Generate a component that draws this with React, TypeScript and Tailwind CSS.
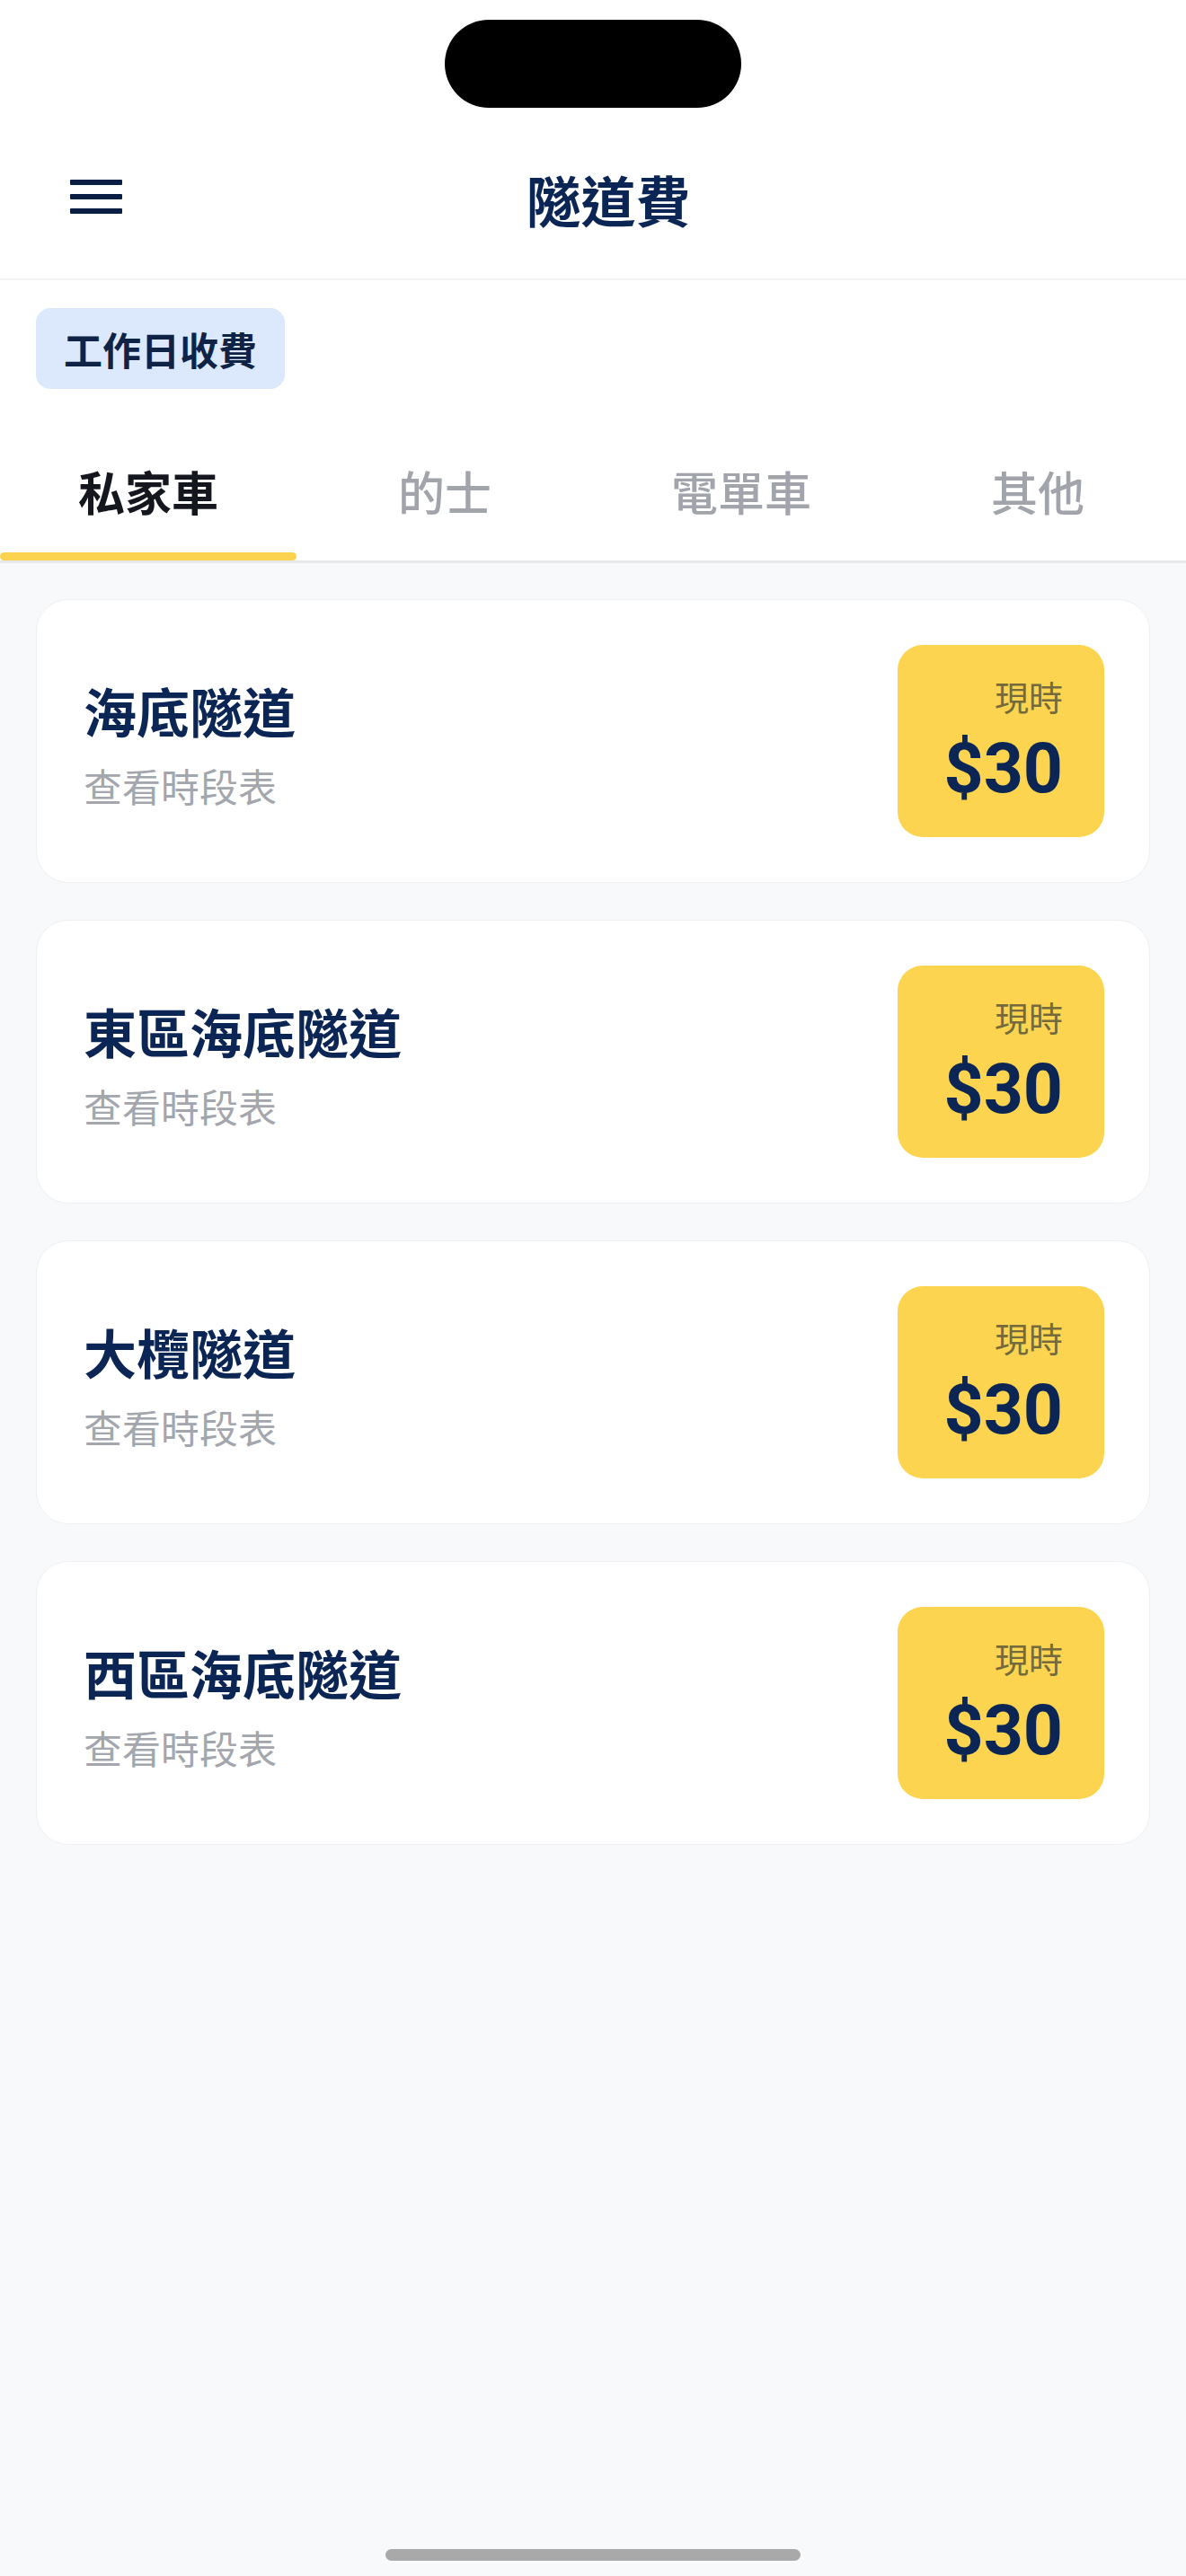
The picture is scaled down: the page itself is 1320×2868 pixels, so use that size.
import { useState } from 'react';

/**
 * Tunnel toll screen (隧道費).
 */

const TABS = ['私家車', '的士', '電單車', '其他'];

const TUNNELS = [
  { name: '海底隧道', price: 30 },
  { name: '東區海底隧道', price: 30 },
  { name: '大欖隧道', price: 30 },
  { name: '西區海底隧道', price: 30 },
];

function MenuIcon() {
  return (
    <svg width="58" height="38" viewBox="0 0 58 38" fill="#0b1f44">
      <rect x="0" y="0" width="58" height="6" rx="1" />
      <rect x="0" y="16" width="58" height="6" rx="1" />
      <rect x="0" y="32" width="58" height="6" rx="1" />
    </svg>
  );
}

function TunnelCard({ name, price }: { name: string; price: number }) {
  return (
    <div className="h-[316px] rounded-[36px] bg-white border border-[#eef0f3] flex items-center justify-between pl-[52px] pr-[50px]">
      <div className="flex flex-col pt-[6px]">
        <span className="text-[59px] leading-none font-bold text-[#0b2554]">{name}</span>
        <span className="mt-[33px] text-[43px] leading-none text-[#a3a6ad]">查看時段表</span>
      </div>
      <div className="w-[230px] h-[214px] rounded-[28px] bg-[#fcd44f] flex flex-col items-end justify-center pr-[46px]">
        <span className="text-[38px] leading-none text-[#746a3c]">現時</span>
        <span className="mt-[24px] text-[77px] leading-none font-bold text-[#0b2554] font-['Roboto',sans-serif]">
          ${price}
        </span>
      </div>
    </div>
  );
}

export default function App() {
  const [active, setActive] = useState(0);

  return (
    <div className="w-[1320px] h-[2868px] bg-[#f8f9fb] flex flex-col font-['Noto_Sans_CJK_TC','Noto_Sans',sans-serif]">
      {/* header */}
      <div className="bg-white border-b-2 border-[#f2f3f5]">
        <div className="h-[140px] pt-[22px] flex justify-center">
          <div className="w-[330px] h-[98px] rounded-full bg-black" />
        </div>
        <div className="h-[170px] relative flex items-center justify-center pl-[34px] pb-[8px]">
          <button type="button" className="absolute left-[78px] top-[60px]">
            <MenuIcon />
          </button>
          <h1 className="text-[61px] leading-none font-bold text-[#0b2554]">隧道費</h1>
        </div>
      </div>

      {/* badge + tabs */}
      <div className="bg-white">
        <div className="pt-[31px] px-[40px]">
          <div className="w-[277px] h-[90px] rounded-[16px] bg-[#dce9fc] flex items-center justify-center">
            <span className="text-[43px] leading-none font-bold text-[#0f2347]">工作日收費</span>
          </div>
        </div>
        <div className="grid grid-cols-4 pt-[88px]">
          {TABS.map((tab, i) => (
            <button
              key={tab}
              type="button"
              onClick={() => setActive(i)}
              className="flex flex-col items-center"
            >
              <span
                className={`text-[52px] leading-[52px] mb-[42px] ${
                  i === active ? 'font-bold text-[#15171f]' : 'font-medium text-[#a1a4ab]'
                }`}
              >
                {tab}
              </span>
              <span className={`w-full h-[9px] rounded-full ${i === active ? 'bg-[#fbd34e]' : 'bg-transparent'}`} />
            </button>
          ))}
        </div>
        <div className="h-[3px] bg-[#e6e8ec]" />
      </div>

      {/* tunnel list */}
      <div className="px-[40px] pt-[40px] flex flex-col gap-[41px]">
        {TUNNELS.map((t) => (
          <TunnelCard key={t.name} name={t.name} price={t.price} />
        ))}
      </div>

      <div className="mt-auto mb-[17px] mx-auto w-[462px] h-[13px] rounded-full bg-[#a9a9a9]" />
    </div>
  );
}
